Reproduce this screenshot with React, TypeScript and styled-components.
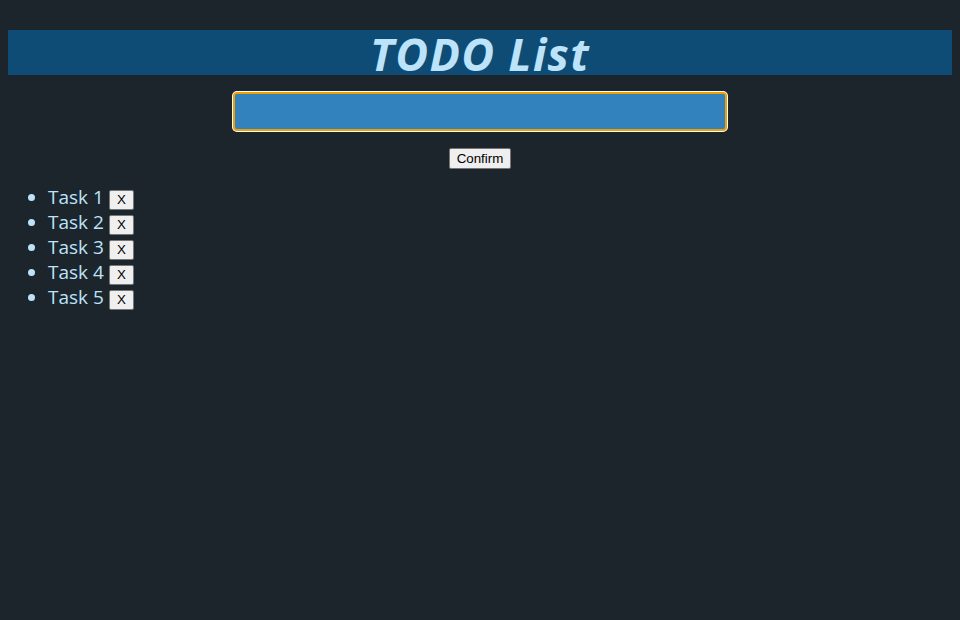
import React, { useState } from "react";
import styled, { createGlobalStyle } from "styled-components";

const Global = createGlobalStyle`
  html, body { background: #1c252b; }
  body { margin: 8px; font-family: "Open Sans", "Noto Sans", sans-serif; }
`;

const Page = styled.div`
  display: flex;
  flex-direction: column;
  padding-top: 22px;
`;

const Header = styled.h1`
  box-sizing: border-box;
  margin: 0;
  height: 45px;
  padding-top: 2px;
  background: #0e4c75;
  color: #bde3fa;
  font-family: "Open Sans", "Noto Sans", sans-serif;
  font-style: italic;
  font-weight: 700;
  font-size: 45px;
  line-height: 43px;
  text-align: center;
  letter-spacing: 1.3px;
`;

const Form = styled.div`
  display: flex;
  flex-direction: column;
  align-items: center;
  margin-top: 17px;
  gap: 17px;
`;

const Input = styled.input`
  box-sizing: border-box;
  width: 494px;
  height: 39px;
  background: #3182bd;
  border: 2px solid #f0a000;
  border-radius: 4px;
  box-shadow: 0 0 0 1px #ffffff;
  outline: none;
  color: #fff;
  font-size: 16px;
  padding: 0 8px;
`;

const Button = styled.button`
  font-family: "Liberation Sans", Arial, sans-serif;
  font-size: 13.33px;
  background: #efefef;
  color: #000;
  border: 1px solid #767676;
  border-radius: 2px;
  padding: 1px 7px;
  height: 21px;
  line-height: 1;
  cursor: pointer;
`;

const List = styled.ul`
  margin: 16px 0 0;
  padding-left: 40px;
  color: #bde3fa;
  font-size: 19px;
  list-style: disc;
`;

const Item = styled.li`
  line-height: 25px;
  &::marker { color: #bde3fa; }
`;

const ItemButton = styled(Button)`
  margin-left: 5px;
  height: 20px;
  width: 25px;
  padding: 0;
`;

export default function App() {
  const [tasks, setTasks] = useState(["Task 1", "Task 2", "Task 3", "Task 4", "Task 5"]);
  const [value, setValue] = useState("");
  return (
    <Page>
      <Global />
      <Header>TODO List</Header>
      <Form>
        <Input value={value} onChange={(e) => setValue(e.target.value)} />
        <Button
          onClick={() => {
            if (value.trim()) {
              setTasks([...tasks, value.trim()]);
              setValue("");
            }
          }}
        >
          Confirm
        </Button>
      </Form>
      <List>
        {tasks.map((t, i) => (
          <Item key={i}>
            {t}
            <ItemButton onClick={() => setTasks(tasks.filter((_, j) => j !== i))}>X</ItemButton>
          </Item>
        ))}
      </List>
    </Page>
  );
}
